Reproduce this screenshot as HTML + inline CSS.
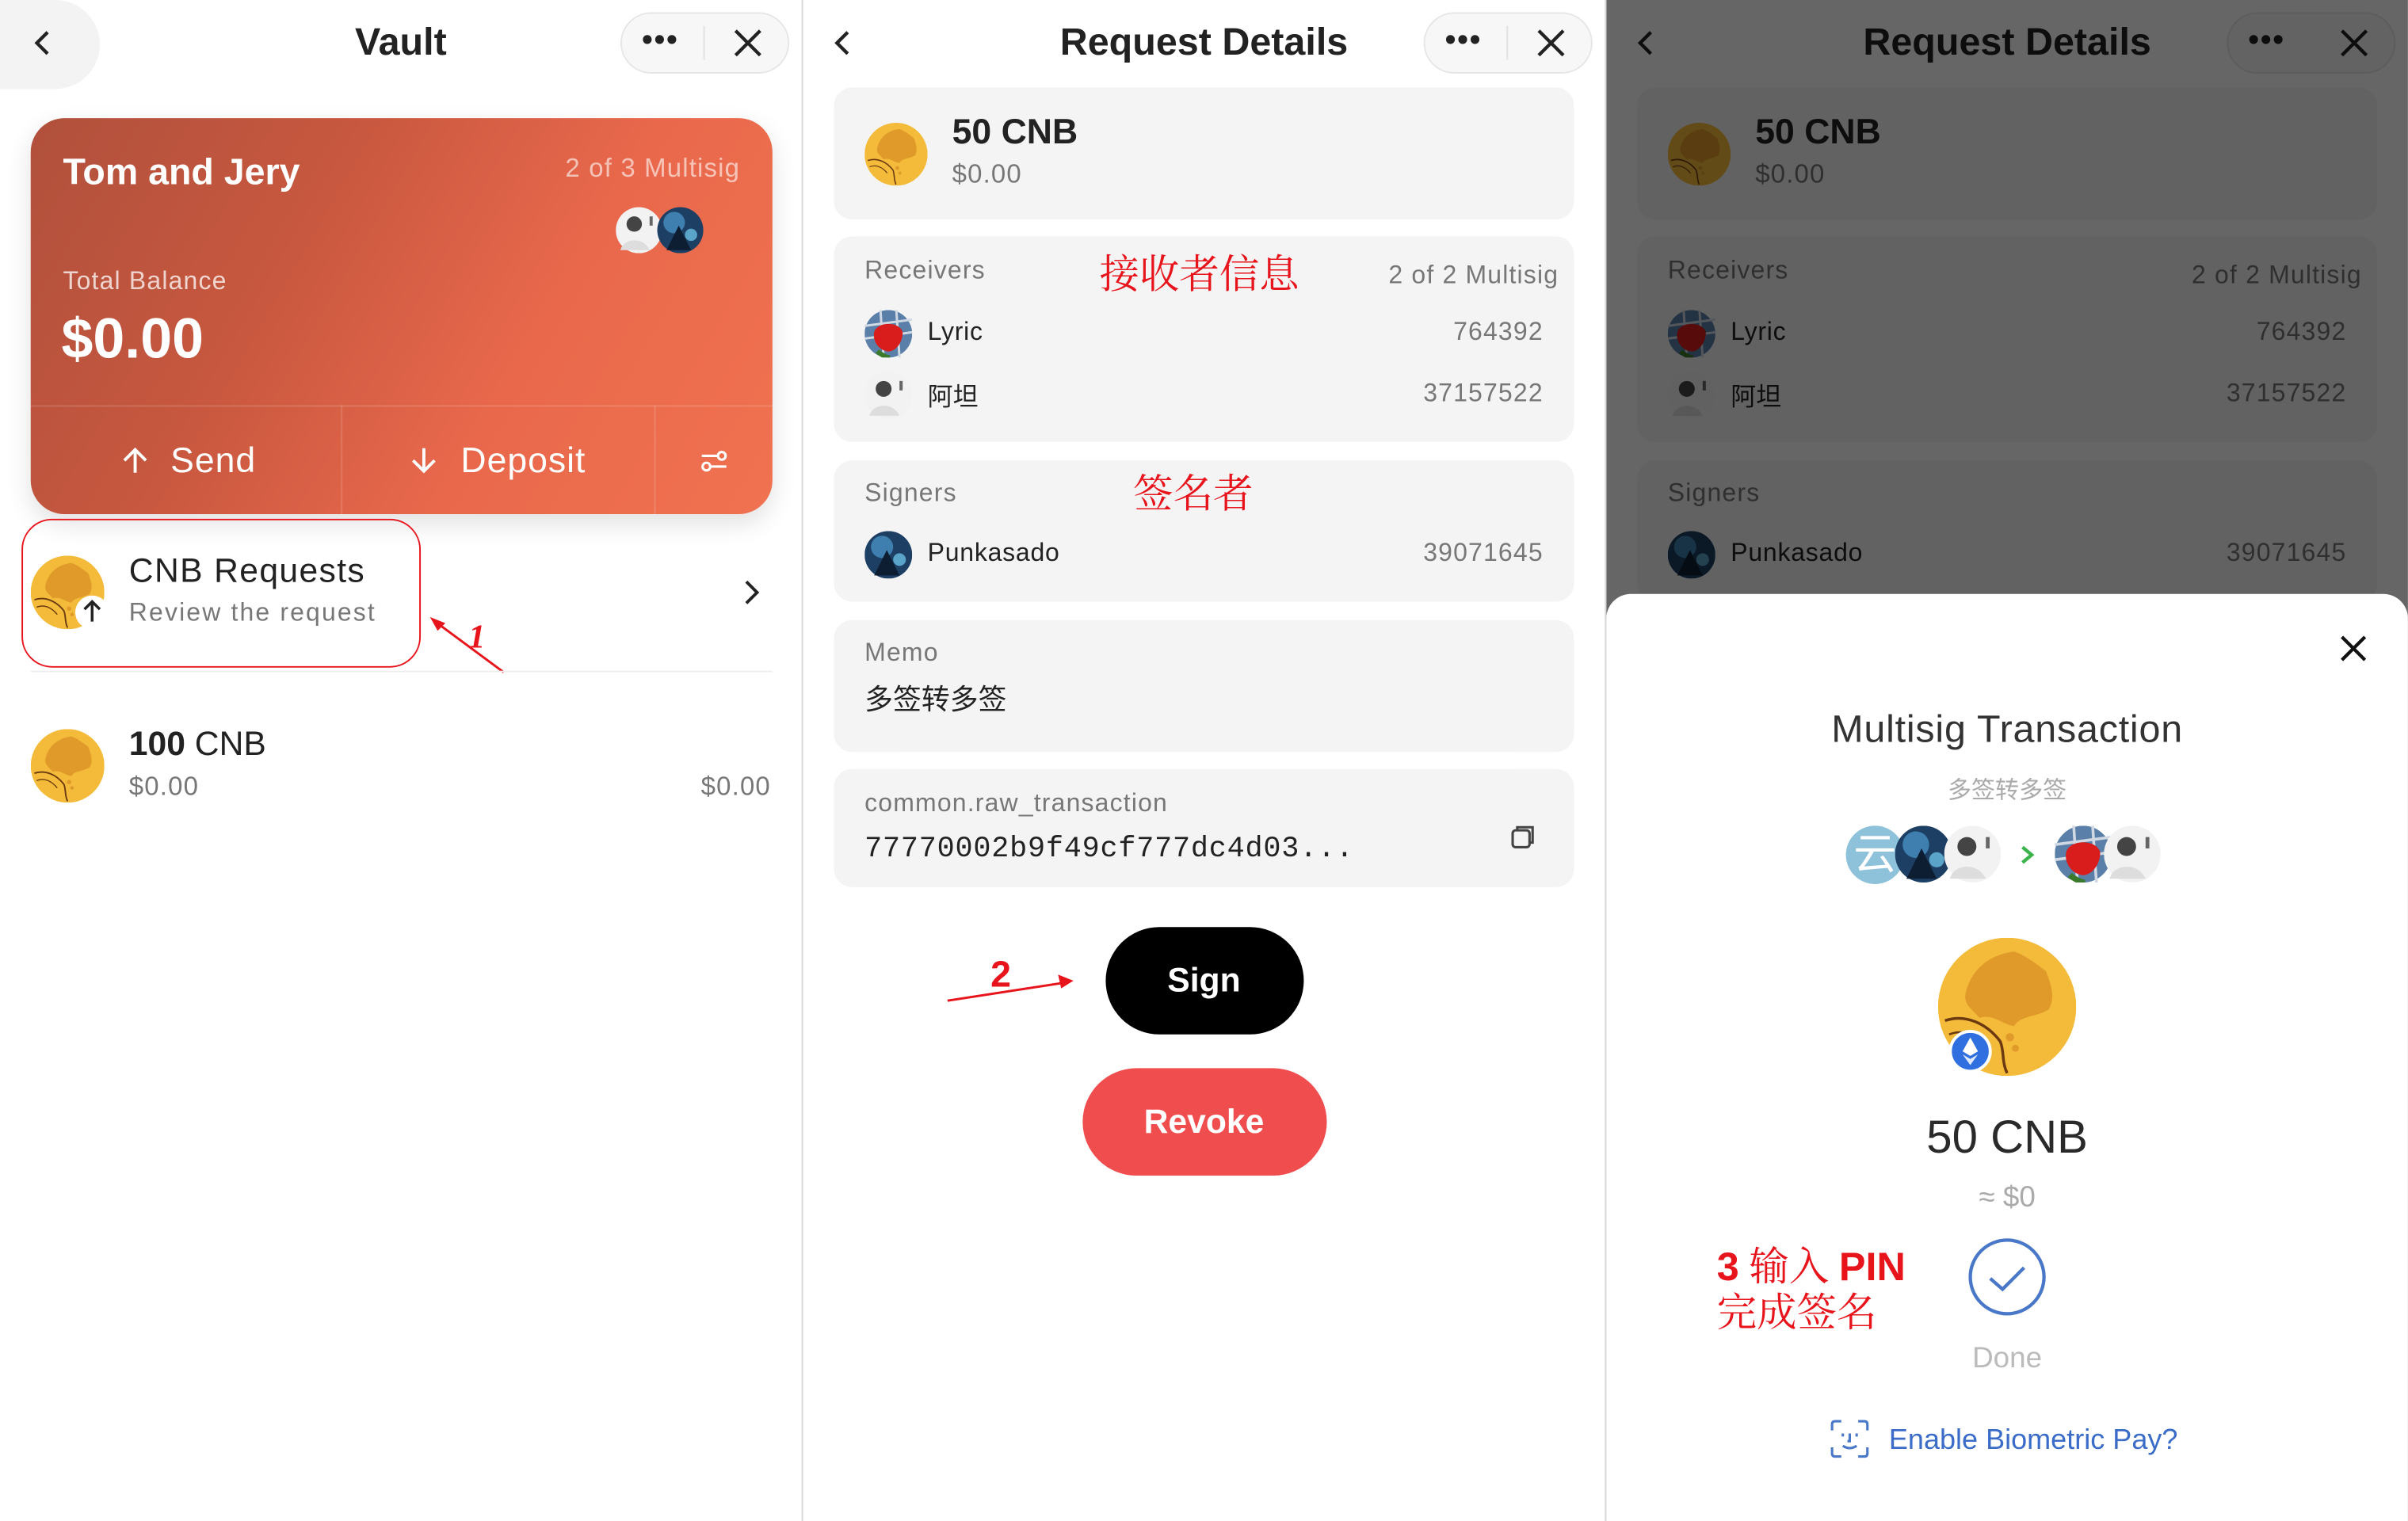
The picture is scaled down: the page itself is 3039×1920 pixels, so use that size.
<!DOCTYPE html>
<html><head><meta charset="utf-8">
<style>
*{margin:0;padding:0;box-sizing:border-box}
html,body{width:3039px;height:1920px;overflow:hidden;background:#fff}
#w{position:absolute;left:0;top:0;width:1568px;height:991px;transform:scale(1.9381,1.9374);transform-origin:0 0;font-family:"Liberation Sans","Noto Sans CJK SC",sans-serif;color:#222}
.p{position:absolute;top:0;width:522px;height:991px;background:#fff;overflow:hidden}
.a{position:absolute;white-space:nowrap}
.l{transform:translateY(-50%)}
.c{transform:translate(-50%,-50%)}
.card{position:absolute;left:20px;width:482px;background:#f4f4f4;border-radius:12px}
.g{color:#777;letter-spacing:.6px}
.s{letter-spacing:.4px}
.cn{font-family:"Liberation Serif","Noto Serif CJK SC",serif;color:#e8141c}
</style></head><body><div id="w">

<svg width="0" height="0" style="position:absolute"><defs>
<symbol id="coin" viewBox="0 0 100 100"><circle cx="50" cy="50" r="50" fill="#f4bb3a"/><path d="M20 40 C25 20 40 12 55 10 C62 12 70 18 78 24 C82 34 85 44 80 52 C70 58 60 56 55 64 C45 62 40 55 30 58 C25 52 18 48 20 40Z" fill="#e09a2a"/><path d="M5 60 C20 55 35 62 45 75 C48 82 46 90 50 98" stroke="#6b3a10" stroke-width="2" fill="none"/><path d="M8 70 C18 66 28 70 36 80" stroke="#6b3a10" stroke-width="1.5" fill="none"/><circle cx="52" cy="72" r="3" fill="#e09a2a"/><circle cx="56" cy="80" r="2.5" fill="#e09a2a"/></symbol>
<symbol id="man" viewBox="0 0 30 30"><circle cx="15" cy="15" r="15" fill="#f2f2f2"/><circle cx="12" cy="11" r="5" fill="#444"/><path d="M3 28 C5 20 18 19 22 28Z" fill="#ddd"/><rect x="22" y="6" width="2" height="6" fill="#666"/></symbol>
<symbol id="blue" viewBox="0 0 30 30"><circle cx="15" cy="15" r="15" fill="#1d3f63"/><circle cx="11" cy="10" r="7" fill="#3f7fb0"/><path d="M6 28 L14 12 L22 28Z" fill="#0d1e33"/><circle cx="22" cy="18" r="4" fill="#5aa3c9"/></symbol>
<symbol id="straw" viewBox="0 0 30 30"><circle cx="15" cy="15" r="15" fill="#5a7fa8"/><path d="M0 10 L30 6 M0 18 L30 14 M10 0 L12 30 M20 0 L22 30" stroke="#cfd8e3" stroke-width="1.5"/><path d="M6 14 C8 7 22 7 24 14 C24 22 18 27 14 26 C9 25 5 20 6 14Z" fill="#d91d1d"/><path d="M8 26 C10 28 14 30 16 30" stroke="#3a7a2a" stroke-width="3"/></symbol>
</defs></svg>

<!-- PANEL 1 -->
<div class="p" style="left:0">
 <div class="a" style="left:0;top:0;width:65px;height:58px;background:#f3f3f3;border-radius:0 32px 32px 0"></div>
 <svg class="a" style="left:20px;top:18px" width="16" height="20" viewBox="0 0 16 20"><path d="M11 3 L4 10 L11 17" stroke="#222" stroke-width="2.2" fill="none"/></svg>
 <div class="a c" style="left:261px;top:28px;font-size:25px;font-weight:bold">Vault</div>
 <div class="a" style="left:404px;top:8px;width:110px;height:40px;border:1px solid #e6e6e6;border-radius:20px;background:#f7f7f7"></div>
 <div class="a" style="left:458px;top:17px;width:1px;height:22px;background:#e2e2e2"></div>
 <div class="a c" style="left:430px;top:27px;font-size:20px;font-weight:bold;letter-spacing:1px">•••</div>
 <svg class="a" style="left:477px;top:18px" width="20" height="20"><path d="M2 2 L18 18 M18 2 L2 18" stroke="#222" stroke-width="2.2"/></svg>

 <div class="a" style="left:20px;top:77px;width:483px;height:258px;border-radius:22px;background:linear-gradient(120deg,#b0503c 0%,#c8583f 35%,#e9684c 65%,#f07250 100%);box-shadow:0 6px 16px rgba(0,0,0,.12);overflow:hidden">
  <div class="a l" style="left:21px;top:36px;font-size:24px;font-weight:bold;color:#fff">Tom and Jery</div>
  <div class="a l" style="right:21px;top:33px;font-size:17px;letter-spacing:.6px;color:rgba(255,255,255,.6)">2 of 3 Multisig</div>
  <svg class="a" style="left:381px;top:58px" width="30" height="30"><use href="#man"/></svg>
  <svg class="a" style="left:408px;top:58px" width="30" height="30"><use href="#blue"/></svg>
  <div class="a l" style="left:21px;top:107px;font-size:16.5px;letter-spacing:.6px;color:rgba(255,255,255,.75)">Total Balance</div>
  <div class="a l" style="left:20px;top:144px;font-size:37px;font-weight:bold;color:#fff">$0.00</div>
  <div class="a" style="left:0;top:187px;width:100%;height:1px;background:rgba(255,255,255,.15)"></div>
  <div class="a" style="left:202px;top:187px;width:1px;height:71px;background:rgba(255,255,255,.15)"></div>
  <div class="a" style="left:406px;top:187px;width:1px;height:71px;background:rgba(255,255,255,.15)"></div>
  <svg class="a" style="left:58px;top:213px" width="20" height="20"><path d="M10 18 V3 M3 10 L10 3 L17 10" stroke="#fff" stroke-width="2" fill="none"/></svg>
  <div class="a l" style="left:91px;top:223px;font-size:23px;letter-spacing:.5px;color:#fff">Send</div>
  <svg class="a" style="left:246px;top:213px" width="20" height="20"><path d="M10 2 V17 M3 10 L10 17 L17 10" stroke="#fff" stroke-width="2" fill="none"/></svg>
  <div class="a l" style="left:280px;top:223px;font-size:23px;letter-spacing:.5px;color:#fff">Deposit</div>
  <svg class="a" style="left:435px;top:214px" width="20" height="18"><path d="M2 6 H12 M8 13 H18" stroke="#fff" stroke-width="1.6"/><circle cx="15" cy="6" r="2.5" stroke="#fff" stroke-width="1.6" fill="none"/><circle cx="5" cy="13" r="2.5" stroke="#fff" stroke-width="1.6" fill="none"/></svg>
 </div>

 <svg class="a" style="left:20px;top:362px" width="48" height="48"><use href="#coin"/></svg>
 <div class="a" style="left:49px;top:388px;width:22px;height:22px;border-radius:50%;background:#fff"></div>
 <svg class="a" style="left:52px;top:390px" width="16" height="16"><path d="M8 15 V2 M3 7 L8 2 L13 7" stroke="#222" stroke-width="1.8" fill="none"/></svg>
 <div class="a l" style="left:84px;top:372px;font-size:22px;letter-spacing:.7px;color:#222">CNB Requests</div>
 <div class="a l g" style="left:84px;top:400px;font-size:16.5px;letter-spacing:1.1px">Review the request</div>
 <svg class="a" style="left:482px;top:377px" width="14" height="18"><path d="M4 2 L11 9 L4 16" stroke="#222" stroke-width="2" fill="none"/></svg>
 <div class="a" style="left:14px;top:338px;width:260px;height:97px;border:1.5px solid #e8141c;border-radius:20px"></div>
 <svg class="a" style="left:276px;top:398px" width="60" height="45"><path d="M52 40 L6 6" stroke="#e8141c" stroke-width="1.5"/><path d="M4 4 L14 8 L9 13Z" fill="#e8141c"/></svg>
 <div class="a cn" style="left:305px;top:402px;font-size:22px;font-weight:bold;font-style:italic">1</div>
 <div class="a" style="left:20px;top:437px;width:483px;height:1px;background:#eee"></div>
 <svg class="a" style="left:20px;top:475px" width="48" height="48"><use href="#coin"/></svg>
 <div class="a l" style="left:84px;top:485px;font-size:22px"><b>100</b> CNB</div>
 <div class="a l g" style="left:84px;top:513px;font-size:17px">$0.00</div>
 <div class="a l g" style="right:20px;top:513px;font-size:17px">$0.00</div>
</div>
<div class="a" style="left:522px;top:0;width:1px;height:991px;background:#d8d8d8"></div>

<!-- PANEL 2 -->
<div class="p" style="left:523px">
 <svg class="a" style="left:18px;top:18px" width="16" height="20"><path d="M11 3 L4 10 L11 17" stroke="#222" stroke-width="2.2" fill="none"/></svg>
 <div class="a c" style="left:261px;top:28px;font-size:25px;font-weight:bold">Request Details</div>
 <div class="a" style="left:404px;top:8px;width:110px;height:40px;border:1px solid #e6e6e6;border-radius:20px;background:#f7f7f7"></div>
 <div class="a" style="left:458px;top:17px;width:1px;height:22px;background:#e2e2e2"></div>
 <div class="a c" style="left:430px;top:27px;font-size:20px;font-weight:bold;letter-spacing:1px">•••</div>
 <svg class="a" style="left:477px;top:18px" width="20" height="20"><path d="M2 2 L18 18 M18 2 L2 18" stroke="#222" stroke-width="2.2"/></svg>

 <div class="card" style="top:57px;height:86px"></div>
 <svg class="a" style="left:40px;top:80px" width="41" height="41"><use href="#coin"/></svg>
 <div class="a l" style="left:97px;top:86px;font-size:23px;font-weight:bold">50 CNB</div>
 <div class="a l g" style="left:97px;top:114px;font-size:17px">$0.00</div>

 <div class="card" style="top:154px;height:134px"></div>
 <div class="a l g" style="left:40px;top:177px;font-size:16.5px">Receivers</div>
 <div class="a l g" style="right:30px;top:180px;font-size:16.5px">2 of 2 Multisig</div>
 <svg class="a" style="left:40px;top:202px" width="31" height="31"><use href="#straw"/></svg>
 <div class="a l s" style="left:81px;top:217px;font-size:16.5px">Lyric</div>
 <div class="a l g" style="right:40px;top:217px;font-size:16.5px">764392</div>
 <svg class="a" style="left:40px;top:242px" width="31" height="31"><use href="#man"/></svg>
 <div class="a l" style="left:81px;top:257px;font-size:16.5px">阿坦</div>
 <div class="a l g" style="right:40px;top:257px;font-size:16.5px">37157522</div>

 <div class="card" style="top:300px;height:92px"></div>
 <div class="a l g" style="left:40px;top:322px;font-size:16.5px">Signers</div>
 <svg class="a" style="left:40px;top:346px" width="31" height="31"><use href="#blue"/></svg>
 <div class="a l s" style="left:81px;top:361px;font-size:16.5px">Punkasado</div>
 <div class="a l g" style="right:40px;top:361px;font-size:16.5px">39071645</div>

 <div class="card" style="top:404px;height:86px"></div>
 <div class="a l g" style="left:40px;top:426px;font-size:16.5px">Memo</div>
 <div class="a l" style="left:40px;top:455px;font-size:18.5px">多签转多签</div>

 <div class="card" style="top:501px;height:77px"></div>
 <div class="a l g" style="left:40px;top:524px;font-size:16.5px">common.raw_transaction</div>
 <div class="a l" style="left:40px;top:553px;font-size:19px;letter-spacing:.4px;font-family:'Liberation Mono',monospace">77770002b9f49cf777dc4d03...</div>
 <svg class="a" style="left:460px;top:536px" width="18" height="18"><rect x="2" y="5" width="11" height="11" rx="2" stroke="#444" stroke-width="1.6" fill="none"/><path d="M5 5 V3 H15 V13 H13" stroke="#444" stroke-width="1.6" fill="none"/></svg>
</div>
<div class="a" style="left:1045px;top:0;width:1px;height:991px;background:#d8d8d8"></div>

<div class="a" style="left:720px;top:604px;width:129px;height:70px;border-radius:35px;background:#000"></div>
<div class="a c" style="left:784px;top:639px;font-size:22px;font-weight:bold;color:#fff">Sign</div>
<div class="a" style="left:705px;top:696px;width:159px;height:70px;border-radius:35px;background:#f04d4f"></div>
<div class="a c" style="left:784px;top:731px;font-size:22px;font-weight:bold;color:#fff">Revoke</div>
<svg class="a" style="left:615px;top:630px" width="90" height="25"><path d="M2 22 L80 10" stroke="#e8141c" stroke-width="1.5"/><path d="M84 9 L74 5 L76 14Z" fill="#e8141c"/></svg>
<div class="a" style="left:645px;top:622px;font-size:24px;font-weight:bold;color:#e8141c;font-family:'Liberation Sans',sans-serif">2</div>
<div class="a c cn" style="left:781px;top:177px;font-size:26px">接收者信息</div>
<div class="a c cn" style="left:777px;top:320px;font-size:26px">签名者</div>

<!-- PANEL 3 -->
<div class="p" style="left:1046px">
 <svg class="a" style="left:18px;top:18px" width="16" height="20"><path d="M11 3 L4 10 L11 17" stroke="#222" stroke-width="2.2" fill="none"/></svg>
 <div class="a c" style="left:261px;top:28px;font-size:25px;font-weight:bold">Request Details</div>
 <div class="a" style="left:404px;top:8px;width:110px;height:40px;border:1px solid #e6e6e6;border-radius:20px;background:#f7f7f7"></div>
 <div class="a c" style="left:430px;top:27px;font-size:20px;font-weight:bold;letter-spacing:1px">•••</div>
 <svg class="a" style="left:477px;top:18px" width="20" height="20"><path d="M2 2 L18 18 M18 2 L2 18" stroke="#222" stroke-width="2.2"/></svg>
 <div class="card" style="top:57px;height:86px"></div>
 <svg class="a" style="left:40px;top:80px" width="41" height="41"><use href="#coin"/></svg>
 <div class="a l" style="left:97px;top:86px;font-size:23px;font-weight:bold">50 CNB</div>
 <div class="a l g" style="left:97px;top:114px;font-size:17px">$0.00</div>
 <div class="card" style="top:154px;height:134px"></div>
 <div class="a l g" style="left:40px;top:177px;font-size:16.5px">Receivers</div>
 <div class="a l g" style="right:30px;top:180px;font-size:16.5px">2 of 2 Multisig</div>
 <svg class="a" style="left:40px;top:202px" width="31" height="31"><use href="#straw"/></svg>
 <div class="a l s" style="left:81px;top:217px;font-size:16.5px">Lyric</div>
 <div class="a l g" style="right:40px;top:217px;font-size:16.5px">764392</div>
 <svg class="a" style="left:40px;top:242px" width="31" height="31"><use href="#man"/></svg>
 <div class="a l" style="left:81px;top:257px;font-size:16.5px">阿坦</div>
 <div class="a l g" style="right:40px;top:257px;font-size:16.5px">37157522</div>
 <div class="card" style="top:300px;height:92px"></div>
 <div class="a l g" style="left:40px;top:322px;font-size:16.5px">Signers</div>
 <svg class="a" style="left:40px;top:346px" width="31" height="31"><use href="#blue"/></svg>
 <div class="a l s" style="left:81px;top:361px;font-size:16.5px">Punkasado</div>
 <div class="a l g" style="right:40px;top:361px;font-size:16.5px">39071645</div>
 <div class="a" style="left:0;top:0;width:522px;height:991px;background:rgba(0,0,0,.6)"></div>
 <div class="a" style="left:0;top:387px;width:522px;height:610px;background:#fff;border-radius:16px 16px 0 0"></div>
 <svg class="a" style="left:477px;top:413px" width="19" height="19"><path d="M2 2 L17 17 M17 2 L2 17" stroke="#111" stroke-width="2.2"/></svg>
 <div class="a c" style="left:261px;top:476px;font-size:25px;letter-spacing:.4px;color:#333">Multisig Transaction</div>
 <div class="a c" style="left:261px;top:514px;font-size:15.5px;color:#aaa">多签转多签</div>
 <div class="a" style="left:156px;top:538px;width:38px;height:38px;border-radius:50%;background:#8ec2da;color:#fff;font-size:28px;line-height:38px;text-align:center">云</div>
 <svg class="a" style="left:188px;top:538px" width="37" height="37"><use href="#blue"/></svg>
 <svg class="a" style="left:220px;top:538px" width="37" height="37"><use href="#man"/></svg>
 <svg class="a" style="left:268px;top:550px" width="12" height="14"><path d="M3 2 L9 7 L3 12" stroke="#3bb34a" stroke-width="2.2" fill="none"/></svg>
 <svg class="a" style="left:292px;top:538px" width="37" height="37"><use href="#straw"/></svg>
 <svg class="a" style="left:324px;top:538px" width="37" height="37"><use href="#man"/></svg>
 <svg class="a" style="left:216px;top:611px" width="90" height="90"><use href="#coin"/></svg>
 <div class="a" style="left:223px;top:671px;width:28px;height:28px;border-radius:50%;background:#2f6fe0;border:2px solid #fff"></div>
 <svg class="a" style="left:230px;top:675px" width="14" height="20"><path d="M7 1 L12 10 L7 13 L2 10Z" fill="#fff"/><path d="M2 12 L7 15 L12 12 L7 19Z" fill="#dfe9ff"/></svg>
 <div class="a c" style="left:261px;top:742px;font-size:30px;color:#2a2a2a">50 CNB</div>
 <div class="a c" style="left:261px;top:781px;font-size:19px;color:#aaa">≈ $0</div>
 <svg class="a" style="left:234px;top:805px" width="54" height="54"><circle cx="27" cy="27" r="24" stroke="#4a78c8" stroke-width="2.2" fill="none"/><path d="M16 28 L24 35 L38 21" stroke="#4a78c8" stroke-width="2.2" fill="none"/></svg>
 <div class="a c" style="left:261px;top:886px;font-size:19px;color:#bbb">Done</div>
 <svg class="a" style="left:145px;top:924px" width="27" height="27" fill="none" stroke="#4a78c8" stroke-width="1.6"><path d="M2 8 V4 Q2 2 4 2 H8 M19 2 H23 Q25 2 25 4 V8 M25 19 V23 Q25 25 23 25 H19 M8 25 H4 Q2 25 2 23 V19"/><path d="M9 10 V12 M18 10 V12 M13.5 10 V15 H12 M9 18 Q13.5 21 18 18"/></svg>
 <div class="a l" style="left:184px;top:938px;font-size:18.6px;color:#3a6cc8">Enable Biometric Pay?</div>
</div>
<div class="a cn" style="left:1118px;top:810px;font-size:26px;line-height:30px"><b style="font-family:'Liberation Sans',sans-serif">3</b> 输入 <b style="font-family:'Liberation Sans',sans-serif">PIN</b><br>完成签名</div>

</div></body></html>
